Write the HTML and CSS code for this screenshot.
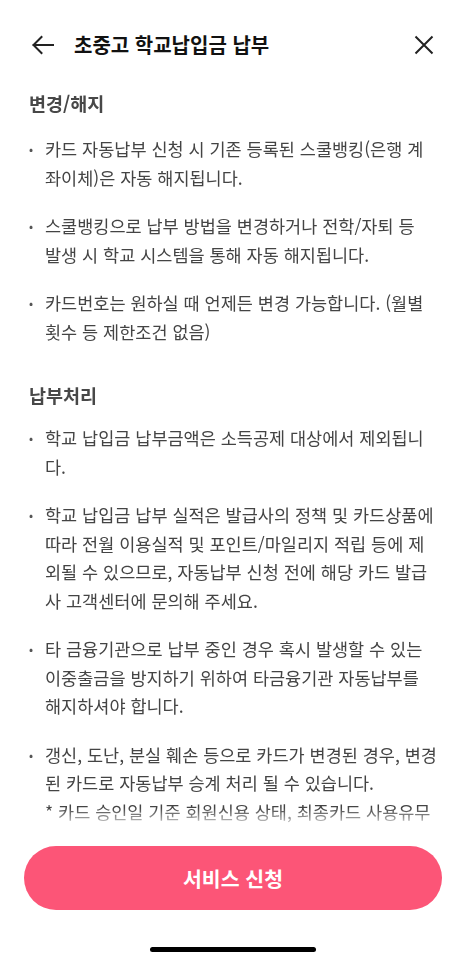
FILE: index.html
```html
<!DOCTYPE html>
<html lang="ko">
<head>
<meta charset="utf-8">
<title>초중고 학교납입금 납부</title>
<link rel="stylesheet" href="styles.css">
</head>
<body>
<div class="page">
  <header class="topbar">
    <svg class="icon back" width="22" height="20" viewBox="0 0 22 20">
      <path d="M21 10H1.5M9.5 2L1.5 10L9.5 18" fill="none" stroke="#222" stroke-width="2" stroke-linecap="square" stroke-linejoin="miter"/>
    </svg>
    <h1 class="title">초중고 학교납입금 납부</h1>
    <svg class="icon close" width="20" height="20" viewBox="0 0 20 20">
      <path d="M1.5 1.5L18.5 18.5M18.5 1.5L1.5 18.5" fill="none" stroke="#222" stroke-width="2"/>
    </svg>
  </header>
  <main class="content">
    <section class="sec">
      <h2 class="sec-title">변경/해지</h2>
      <ul class="list">
        <li><span class="dot">•</span><p>카드 자동납부 신청 시 기존 등록된 스쿨뱅킹(은행 계좌이체)은 자동 해지됩니다.</p></li>
        <li><span class="dot">•</span><p>스쿨뱅킹으로 납부 방법을 변경하거나 전학/자퇴 등 <span class="nw">발생</span> 시 학교 시스템을 통해 자동 해지됩니다.</p></li>
        <li><span class="dot">•</span><p>카드번호는 원하실 때 언제든 변경 가능합니다. (월별 횟수 등 제한조건 없음)</p></li>
      </ul>
    </section>
    <section class="sec sec2">
      <h2 class="sec-title">납부처리</h2>
      <ul class="list">
        <li><span class="dot">•</span><p>학교 납입금 납부금액은 소득공제 대상에서 제외됩니다.</p></li>
        <li><span class="dot">•</span><p>학교 납입금 납부 실적은 발급사의 정책 및 카드상품에 따라 전월 이용실적 및 포인트/마일리지 적립 등에 제외될 수 있으므로, 자동납부 신청 전에 해당 카드 발급사 고객센터에 문의해 주세요.</p></li>
        <li><span class="dot">•</span><p>타 금융기관으로 납부 중인 경우 혹시 발생할 수 있는 이중출금을 방지하기 위하여 타금융기관 자동납부를 해지하셔야 합니다.</p></li>
        <li><span class="dot">•</span><p>갱신, 도난, 분실 훼손 등으로 카드가 변경된 경우, 변경된 카드로 자동납부 승계 처리 될 수 있습니다.<br>* 카드 승인일 기준 회원신용 상태, 최종카드 사용유무 등에 따라 승계 처리가 불가할 수 있습니다.</p></li>
      </ul>
    </section>
  </main>
  <footer class="footer">
    <button class="cta" type="button">서비스 신청</button>
    <div class="home-bar"></div>
  </footer>
</div>
</body>
</html>
```

FILE: styles.css
```css
* { box-sizing: border-box; }
html, body {
  margin: 0;
  padding: 0;
  background: #fff;
}
body {
  font-family: "Noto Sans CJK KR", "Noto Sans", sans-serif;
  color: #444;
}
.page {
  width: 466px;
  height: 965px;
  display: flex;
  flex-direction: column;
  overflow: hidden;
}
.topbar {
  height: 90px;
  flex: none;
  display: flex;
  align-items: center;
  padding: 0 32px 0 32px;
}
.icon { flex: none; display: block; }
.back { margin-right: 20px; }
.title {
  flex: 1;
  margin: 0;
  font-size: 20px;
  font-weight: 700;
  color: #111;
  line-height: 26px;
}
.content {
  flex: 1;
  min-height: 0;
  overflow: hidden;
  padding: 0 29px 0 29px;
  -webkit-mask-image: linear-gradient(to bottom, #000 calc(100% - 22px), transparent);
  mask-image: linear-gradient(to bottom, #000 calc(100% - 22px), transparent);
}
.sec-title {
  margin: 0;
  font-size: 18.5px;
  font-weight: 700;
  line-height: 26px;
  color: #484848;
}
.sec2 { margin-top: 36px; }
.list {
  list-style: none;
  margin: 19px 0 0;
  padding: 0;
  display: flex;
  flex-direction: column;
  gap: 20px;
}
.sec2 .list { margin-top: 16px; }
.list li {
  display: flex;
  align-items: flex-start;
}
.dot {
  flex: none;
  width: 16px;
  font-size: 12px;
  line-height: 28.5px;
  color: #555;
}
.list p {
  margin: 0;
  flex: 1;
  font-size: 17.5px;
  line-height: 28.5px;
  color: #444;
  word-break: break-all;
}
.nw { white-space: nowrap; }
.footer {
  flex: none;
  height: 135px;
  display: flex;
  flex-direction: column;
  align-items: center;
  padding-top: 16px;
}
.cta {
  width: 418px;
  height: 64px;
  border: none;
  border-radius: 32px;
  background: #fc5577;
  color: #fff;
  font-family: "Noto Sans CJK KR", "Noto Sans", sans-serif;
  font-size: 20.5px;
  font-weight: 700;
}
.home-bar {
  margin-top: 37px;
  width: 166px;
  height: 5px;
  border-radius: 3px;
  background: #000;
}
```
